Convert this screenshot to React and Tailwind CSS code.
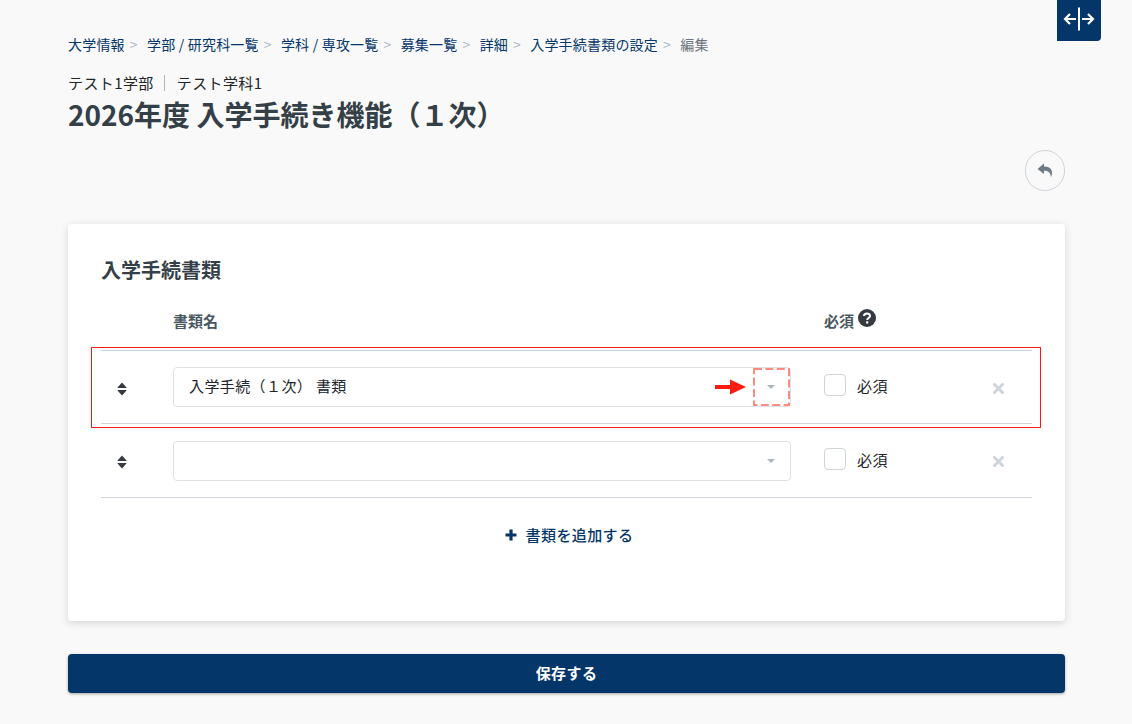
import { useState } from 'react'

const crumbs = [
  '大学情報',
  '学部 / 研究科一覧',
  '学科 / 専攻一覧',
  '募集一覧',
  '詳細',
  '入学手続書類の設定',
]

const Sorter = () => (
  <svg width="10" height="14" viewBox="0 0 10 14" className="fill-[#343a40]">
    <path d="M5 0.5 L9.5 5.5 Q9.7 6 9 6 L1 6 Q0.3 6 0.5 5.5 Z" />
    <path d="M5 13.5 L9.5 8.5 Q9.7 8 9 8 L1 8 Q0.3 8 0.5 8.5 Z" />
  </svg>
)

const Cross = () => (
  <svg width="11" height="11" viewBox="0 0 11 11" className="stroke-[#ced4da]" strokeWidth="3" strokeLinecap="round">
    <path d="M1.5 1.5 L9.5 9.5 M9.5 1.5 L1.5 9.5" />
  </svg>
)

const DocRow = ({ value, marked }) => {
  const [checked, setChecked] = useState(false)
  return (
    <div className={`flex items-center border-t border-[#ced4da] ${marked ? 'h-[73px]' : 'h-[74px]'}`}>
      <div className="flex w-[72px] justify-start pl-[16px] pt-[3px]">
        <Sorter />
      </div>
      <div className="relative flex h-[40px] w-[618px] items-center rounded border border-[#dee2e6] bg-white pb-[2px] pl-[15px] text-[15px] tracking-[0.4px] text-[#212529]">
        {value}
        <span className="absolute right-[15px] top-[17px] h-0 w-0 border-x-[4px] border-t-[4px] border-x-transparent border-t-[#adb5bd]" />
        {marked && (
          <>
            <svg width="37" height="38" viewBox="0 0 37 38" fill="none" className="absolute right-0 top-0">
              <rect x="1" y="1" width="35" height="36" stroke="#ff8a80" strokeWidth="2" strokeDasharray="8 3.4" />
            </svg>
            <svg width="32" height="16" viewBox="0 0 32 16" className="absolute left-[541px] top-[11px] fill-[#ff1a12]">
              <path d="M0 6 H15 V0.5 L31 8 L15 15.5 V10 H0 Z" />
            </svg>
          </>
        )}
      </div>
      <label className="ml-[33px] flex items-center text-[15px] tracking-[0.4px] text-[#212529]">
        <input
          type="checkbox"
          checked={checked}
          onChange={() => setChecked(!checked)}
          className="mb-[4px] h-[22px] w-[22px] appearance-none rounded border border-[#ced4da] bg-white"
        />
        <span className={`ml-[11px] ${marked ? 'pb-[1px]' : ''}`}>必須</span>
      </label>
      <div className="ml-[105px] flex pt-[2px]">
        <Cross />
      </div>
    </div>
  )
}

const App = () => {
  return (
    <div
      className="relative min-h-[724px] bg-[#f9f9f9] pl-[68px] pr-[67px] pt-[34px]"
      style={{ fontFamily: '"Noto Sans CJK JP", "Noto Sans", sans-serif' }}
    >
      <button className="absolute left-[1057px] top-0 flex h-[41px] w-[44px] items-center justify-center rounded-br-sm bg-[#05366a]">
        <svg width="32" height="24" viewBox="0 0 32 24" fill="none" stroke="white" strokeWidth="2.2" className="mb-[3px]">
          <path d="M16 0.5 V23.5" strokeWidth="2" />
          <path d="M13 12 H2 M7 7 L2 12 L7 17" />
          <path d="M19 12 H30 M25 7 L30 12 L25 17" />
        </svg>
      </button>

      <nav className="flex h-[20px] items-center text-[14px] tracking-[0.2px] text-[#05366a]">
        {crumbs.map((c) => (
          <span key={c} className="flex items-center">
            <span>{c}</span>
            <span className="ml-[5px] mr-[9.2px] text-[#adb5bd]">&gt;</span>
          </span>
        ))}
        <span className="text-[#6c757d]">編集</span>
      </nav>

      <div className="mt-[18px] flex h-[22px] items-center text-[15px] tracking-[0.4px] text-[#212529]">
        テスト1学部
        <span className="ml-[10px] mr-[12px] h-[16px] w-px bg-[#adb5bd]" />
        テスト学科1
      </div>
      <h1 className="h-[40px] text-[28px] font-bold leading-[40px] text-[#343f48]">
        2026年度 入学手続き機能（１次）
      </h1>

      <div className="mt-[16px] flex justify-end">
        <button className="flex h-[41px] w-[40px] items-center justify-center rounded-full border border-[#ced4da] bg-[#f9f9f9]">
          <svg width="17" height="15" viewBox="0 0 17 15" className="fill-[#6c7a86]">
            <path d="M7 0.5 L0.5 6 L7 11 V7.8 C11 7.8 13.5 9 14 14.5 C16.5 8.5 14.5 3.6 7 3.6 Z" />
          </svg>
        </button>
      </div>

      <div className="relative mt-[33px] h-[397px] rounded bg-white px-[33px] pt-[32px] shadow-[0_2px_8px_rgba(0,0,0,0.15)]">
        <h2 className="h-[28px] text-[20px] font-bold leading-[28px] text-[#343f48]">入学手続書類</h2>

        <div className="mt-[24px] flex h-[26px] items-center text-[15px] font-bold text-[#4a5761]">
          <span className="ml-[72px] w-[651px]">書類名</span>
          <span>必須</span>
          <svg width="18" height="18" viewBox="0 0 18 18" className="mb-[6px] ml-[4px]">
            <circle cx="9" cy="9" r="9" fill="#343a40" />
            <path d="M6 7 C6 3.6 12 3.6 12 7 C12 9 9.2 9 9.2 11" fill="none" stroke="white" strokeWidth="2" />
            <rect x="8.1" y="12.3" width="2.2" height="2.2" fill="white" />
          </svg>
        </div>

        <div className="mt-[16px] border-b border-[#ced4da]">
          <DocRow value="入学手続（１次） 書類" marked />
          <DocRow value="" />
        </div>

        <button className="mt-[26px] flex w-full items-center justify-center pl-[5px] text-[15px] font-medium tracking-[0.4px] text-[#05366a]">
          <svg width="12" height="12" viewBox="0 0 12 12" className="mr-[9px] fill-[#05366a]">
            <path d="M4.4 0.5 H7.6 V4.4 H11.5 V7.6 H7.6 V11.5 H4.4 V7.6 H0.5 V4.4 H4.4 Z" />
          </svg>
          書類を追加する
        </button>

        {/* red annotation box over the first row */}
        <div className="absolute left-[23px] top-[123px] h-[81px] w-[950px] border border-[#ff1a12]" />
      </div>

      <button className="mt-[33px] flex h-[39px] w-full items-center justify-center rounded bg-[#05366a] text-[15px] font-bold tracking-[0.4px] text-white shadow-[0_1px_3px_rgba(0,0,0,0.35)]">
        保存する
      </button>
    </div>
  )
}

export default App
